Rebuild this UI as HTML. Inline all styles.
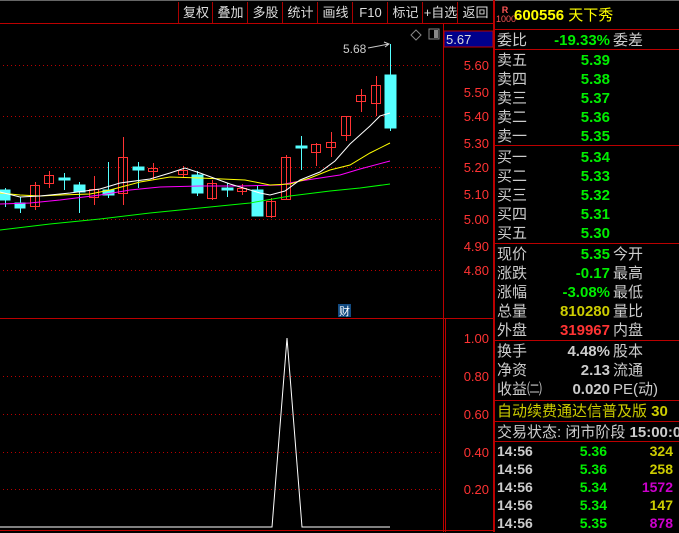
<!DOCTYPE html><html><head><meta charset="utf-8"><style>
body{margin:0;background:#000;width:679px;height:532px;overflow:hidden;position:relative;font-family:"Liberation Sans","Noto Sans CJK SC",sans-serif}
.a{position:absolute;white-space:nowrap}
.tb{position:absolute;top:2px;height:21px;line-height:21px;font-size:13px;color:#ddd;text-align:center;border-left:1px solid #a00}
.r{position:absolute;font-size:15px;line-height:19px;white-space:nowrap}
.l{left:497px;color:#ccc}
.v{right:69px;text-align:right;font-weight:bold}
.l2{left:613px;color:#ccc}
.hl{position:absolute;left:494px;width:185px;height:1px;background:#b00}
.t{font-weight:bold;font-size:14px;color:#ccc}
</style></head><body>
<div class="a" style="left:0;top:0;width:679px;height:1px;background:#666"></div>
<div class="tb" style="left:178px;width:34px">复权</div>
<div class="tb" style="left:212px;width:35px">叠加</div>
<div class="tb" style="left:247px;width:35px">多股</div>
<div class="tb" style="left:282px;width:35px">统计</div>
<div class="tb" style="left:317px;width:35px">画线</div>
<div class="tb" style="left:352px;width:35px">F10</div>
<div class="tb" style="left:387px;width:35px">标记</div>
<div class="tb" style="left:422px;width:35px">+自选</div>
<div class="tb" style="left:457px;width:35px;border-right:1px solid #a00">返回</div>
<div class="a" style="left:0;top:23px;width:494px;height:1px;background:#b00"></div>
<svg class="a" style="left:0;top:0" width="494" height="532">
<g stroke="#b00" stroke-width="1">
<line x1="443.5" y1="24" x2="443.5" y2="532"/><line x1="493.5" y1="0" x2="493.5" y2="532"/>
<line x1="0" y1="318.5" x2="494" y2="318.5"/><line x1="445.5" y1="318" x2="445.5" y2="532"/>
<line x1="0" y1="530.5" x2="494" y2="530.5"/>
</g>
<g stroke="#b00" stroke-dasharray="1,3">
<line x1="3" y1="65.5" x2="440" y2="65.5"/><line x1="3" y1="116.5" x2="440" y2="116.5"/><line x1="3" y1="167.5" x2="440" y2="167.5"/><line x1="3" y1="219.5" x2="440" y2="219.5"/><line x1="3" y1="270.5" x2="440" y2="270.5"/>
<line x1="3" y1="376.5" x2="440" y2="376.5"/><line x1="3" y1="414.5" x2="440" y2="414.5"/><line x1="3" y1="452.5" x2="440" y2="452.5"/><line x1="3" y1="489.5" x2="440" y2="489.5"/>
</g>
<rect x="444" y="31" width="49" height="16" fill="#00008b" stroke="#b00"/>
<text x="446" y="44" fill="#ddd" font-size="13">5.67</text>
<g fill="#f33" font-size="13" text-anchor="end"><text x="489" y="70">5.60</text><text x="489" y="97">5.50</text><text x="489" y="121">5.40</text><text x="489" y="148">5.30</text><text x="489" y="172">5.20</text><text x="489" y="199">5.10</text><text x="489" y="224">5.00</text><text x="489" y="251">4.90</text><text x="489" y="275">4.80</text>
<text x="489" y="343">1.00</text><text x="489" y="381">0.80</text><text x="489" y="419">0.60</text><text x="489" y="457">0.40</text><text x="489" y="494">0.20</text></g>
<text x="343" y="53" fill="#ccc" font-size="12">5.68</text>
<path d="M368 48 L389 44 M384 42 L389 44 L385 47" stroke="#ccc" fill="none"/>
<path d="M416 30 l5 5 -5 5 -5 -5z" stroke="#888" fill="none"/>
<rect x="429" y="29" width="10" height="10" stroke="#888" fill="none"/><rect x="434" y="30" width="4" height="8" fill="#888"/>
<rect x="338" y="304" width="13" height="13" fill="#124a80"/><text x="339" y="315" fill="#fff" font-size="11">财</text>
<g stroke-width="1">
<g stroke="#5ff" fill="#5ff">
<line x1="5.5" y1="188" x2="5.5" y2="207"/><rect x="0" y="190" width="10" height="10"/>
<line x1="20.5" y1="197" x2="20.5" y2="213"/><rect x="15" y="203" width="10" height="5"/>
<line x1="64.5" y1="173" x2="64.5" y2="190"/><rect x="59" y="178" width="11" height="2"/>
<line x1="79.5" y1="182" x2="79.5" y2="213"/><rect x="74" y="185" width="11" height="7"/>
<line x1="108.5" y1="162" x2="108.5" y2="198"/><rect x="103" y="190" width="11" height="5"/>
<line x1="138.5" y1="162" x2="138.5" y2="188"/><rect x="133" y="167" width="11" height="3"/>
<line x1="197.5" y1="171" x2="197.5" y2="196"/><rect x="192" y="175" width="11" height="18"/>
<line x1="227.5" y1="183" x2="227.5" y2="197"/><rect x="222" y="188" width="11" height="2"/>
<line x1="257.5" y1="186" x2="257.5" y2="216"/><rect x="252" y="190" width="11" height="26"/>
<line x1="301.5" y1="136" x2="301.5" y2="170"/><rect x="296" y="146" width="11" height="2"/>
<line x1="390.5" y1="44" x2="390.5" y2="131"/><rect x="385" y="75" width="11" height="53"/>
</g>
<g stroke="#f33" fill="none">
<line x1="35.5" y1="182" x2="35.5" y2="210"/><rect x="30.5" y="185.5" width="9" height="21"/>
<line x1="49.5" y1="171" x2="49.5" y2="188"/><rect x="44.5" y="175.5" width="9" height="8"/>
<line x1="94.5" y1="176" x2="94.5" y2="205"/><rect x="89.5" y="189.5" width="9" height="8"/>
<line x1="123.5" y1="137" x2="123.5" y2="205"/><rect x="118.5" y="157.5" width="9" height="36"/>
<line x1="153.5" y1="163" x2="153.5" y2="180"/><rect x="148.5" y="168.5" width="9" height="3"/>
<line x1="183.5" y1="166" x2="183.5" y2="178"/><rect x="178.5" y="170.5" width="9" height="4"/>
<line x1="212.5" y1="180" x2="212.5" y2="200"/><rect x="207.5" y="183.5" width="9" height="15"/>
<line x1="242.5" y1="184" x2="242.5" y2="195"/><rect x="237.5" y="188.5" width="9" height="3"/>
<line x1="271.5" y1="198" x2="271.5" y2="218"/><rect x="266.5" y="201.5" width="9" height="15"/>
<line x1="286.5" y1="155" x2="286.5" y2="200"/><rect x="281.5" y="157.5" width="9" height="42"/>
<line x1="316.5" y1="143" x2="316.5" y2="166"/><rect x="311.5" y="144.5" width="9" height="8"/>
<line x1="331.5" y1="132" x2="331.5" y2="157"/><rect x="326.5" y="142.5" width="9" height="5"/>
<line x1="346.5" y1="116" x2="346.5" y2="141"/><rect x="341.5" y="116.5" width="9" height="19"/>
<line x1="361.5" y1="89" x2="361.5" y2="112"/><rect x="356.5" y="95.5" width="9" height="6"/>
<line x1="376.5" y1="76" x2="376.5" y2="116"/><rect x="371.5" y="85.5" width="9" height="18"/>
</g>
</g>
<g fill="none" stroke-width="1">
<polyline stroke="#0f0" points="0,230 50,224 100,219 150,213 200,208 250,203 290,196 330,191 360,188 390,184"/>
<polyline stroke="#f0f" points="0,204 30,203 60,200 100,195 130,190 160,187 200,186 240,186 280,185 300,181 320,178 340,175 360,169 390,161"/>
<polyline stroke="#ff0" points="0,193 20,195 40,196 60,195 90,194 110,190 140,182 170,177 200,178 245,180 270,185 290,184 310,178 330,170 350,165 370,153 390,143"/>
<polyline stroke="#fff" points="0,192 20,197 40,196 70,193 100,189 120,183 150,179 170,173 185,168 200,173 230,184 260,193 270,195 285,191 300,180 320,172 335,161 350,144 370,126 380,116 390,113"/>
<polyline stroke="#fff" points="0,527 272,527 287,338 302,527 390,527"/>
</g>
</svg>
<div class="a" style="left:494px;top:0;width:1px;height:532px;background:#b00"></div>
<div class="a" style="left:496px;top:6px;color:#f55;font-size:9px;line-height:9px;font-weight:bold;text-align:center;width:18px">R<br><span style="font-weight:normal">1000</span></div>
<div class="r" style="left:514px;top:6px;color:#ff0;font-size:15px"><b>600556</b> 天下秀</div>
<div class="hl" style="top:29px"></div>
<div class="r l" style="top:31px">委比</div><div class="r v" style="top:31px;color:#0e0">-19.33%</div><div class="r l2" style="top:31px">委差</div>
<div class="hl" style="top:49px"></div>
<div class="r l" style="top:51px">卖五</div><div class="r v" style="top:51px;color:#0e0">5.39</div>
<div class="r l" style="top:70px">卖四</div><div class="r v" style="top:70px;color:#0e0">5.38</div>
<div class="r l" style="top:89px">卖三</div><div class="r v" style="top:89px;color:#0e0">5.37</div>
<div class="r l" style="top:108px">卖二</div><div class="r v" style="top:108px;color:#0e0">5.36</div>
<div class="r l" style="top:127px">卖一</div><div class="r v" style="top:127px;color:#0e0">5.35</div>
<div class="hl" style="top:145px"></div>
<div class="r l" style="top:148px">买一</div><div class="r v" style="top:148px;color:#0e0">5.34</div>
<div class="r l" style="top:167px">买二</div><div class="r v" style="top:167px;color:#0e0">5.33</div>
<div class="r l" style="top:186px">买三</div><div class="r v" style="top:186px;color:#0e0">5.32</div>
<div class="r l" style="top:205px">买四</div><div class="r v" style="top:205px;color:#0e0">5.31</div>
<div class="r l" style="top:224px">买五</div><div class="r v" style="top:224px;color:#0e0">5.30</div>
<div class="hl" style="top:243px"></div>
<div class="r l" style="top:245px">现价</div><div class="r v" style="top:245px;color:#0e0">5.35</div><div class="r l2" style="top:245px">今开</div>
<div class="r l" style="top:264px">涨跌</div><div class="r v" style="top:264px;color:#0e0">-0.17</div><div class="r l2" style="top:264px">最高</div>
<div class="r l" style="top:283px">涨幅</div><div class="r v" style="top:283px;color:#0e0">-3.08%</div><div class="r l2" style="top:283px">最低</div>
<div class="r l" style="top:302px">总量</div><div class="r v" style="top:302px;color:#cc0">810280</div><div class="r l2" style="top:302px">量比</div>
<div class="r l" style="top:321px">外盘</div><div class="r v" style="top:321px;color:#f33">319967</div><div class="r l2" style="top:321px">内盘</div>
<div class="hl" style="top:340px"></div>
<div class="r l" style="top:342px">换手</div><div class="r v" style="top:342px;color:#ccc">4.48%</div><div class="r l2" style="top:342px">股本</div>
<div class="r l" style="top:361px">净资</div><div class="r v" style="top:361px;color:#ccc">2.13</div><div class="r l2" style="top:361px">流通</div>
<div class="r l" style="top:380px">收益㈡</div><div class="r v" style="top:380px;color:#ccc">0.020</div><div class="r l2" style="top:380px">PE(动)</div>
<div class="hl" style="top:400px"></div>
<div class="r" style="left:497px;top:402px;color:#cc0">自动续费通达信普及版 <b>30</b></div>
<div class="hl" style="top:421px"></div>
<div class="r" style="left:497px;top:423px;color:#ccc">交易状态: 闭市阶段 <b>15:00:0</b></div>
<div class="hl" style="top:441px"></div>
<div class="r t" style="left:497px;top:442px">14:56</div><div class="r t" style="right:72px;top:442px;color:#0e0">5.36</div><div class="r t" style="right:6px;top:442px;color:#cc0">324</div>
<div class="r t" style="left:497px;top:460px">14:56</div><div class="r t" style="right:72px;top:460px;color:#0e0">5.36</div><div class="r t" style="right:6px;top:460px;color:#cc0">258</div>
<div class="r t" style="left:497px;top:478px">14:56</div><div class="r t" style="right:72px;top:478px;color:#0e0">5.34</div><div class="r t" style="right:6px;top:478px;color:#c0c">1572</div>
<div class="r t" style="left:497px;top:496px">14:56</div><div class="r t" style="right:72px;top:496px;color:#0e0">5.34</div><div class="r t" style="right:6px;top:496px;color:#cc0">147</div>
<div class="r t" style="left:497px;top:514px">14:56</div><div class="r t" style="right:72px;top:514px;color:#0e0">5.35</div><div class="r t" style="right:6px;top:514px;color:#c0c">878</div>
</body></html>
